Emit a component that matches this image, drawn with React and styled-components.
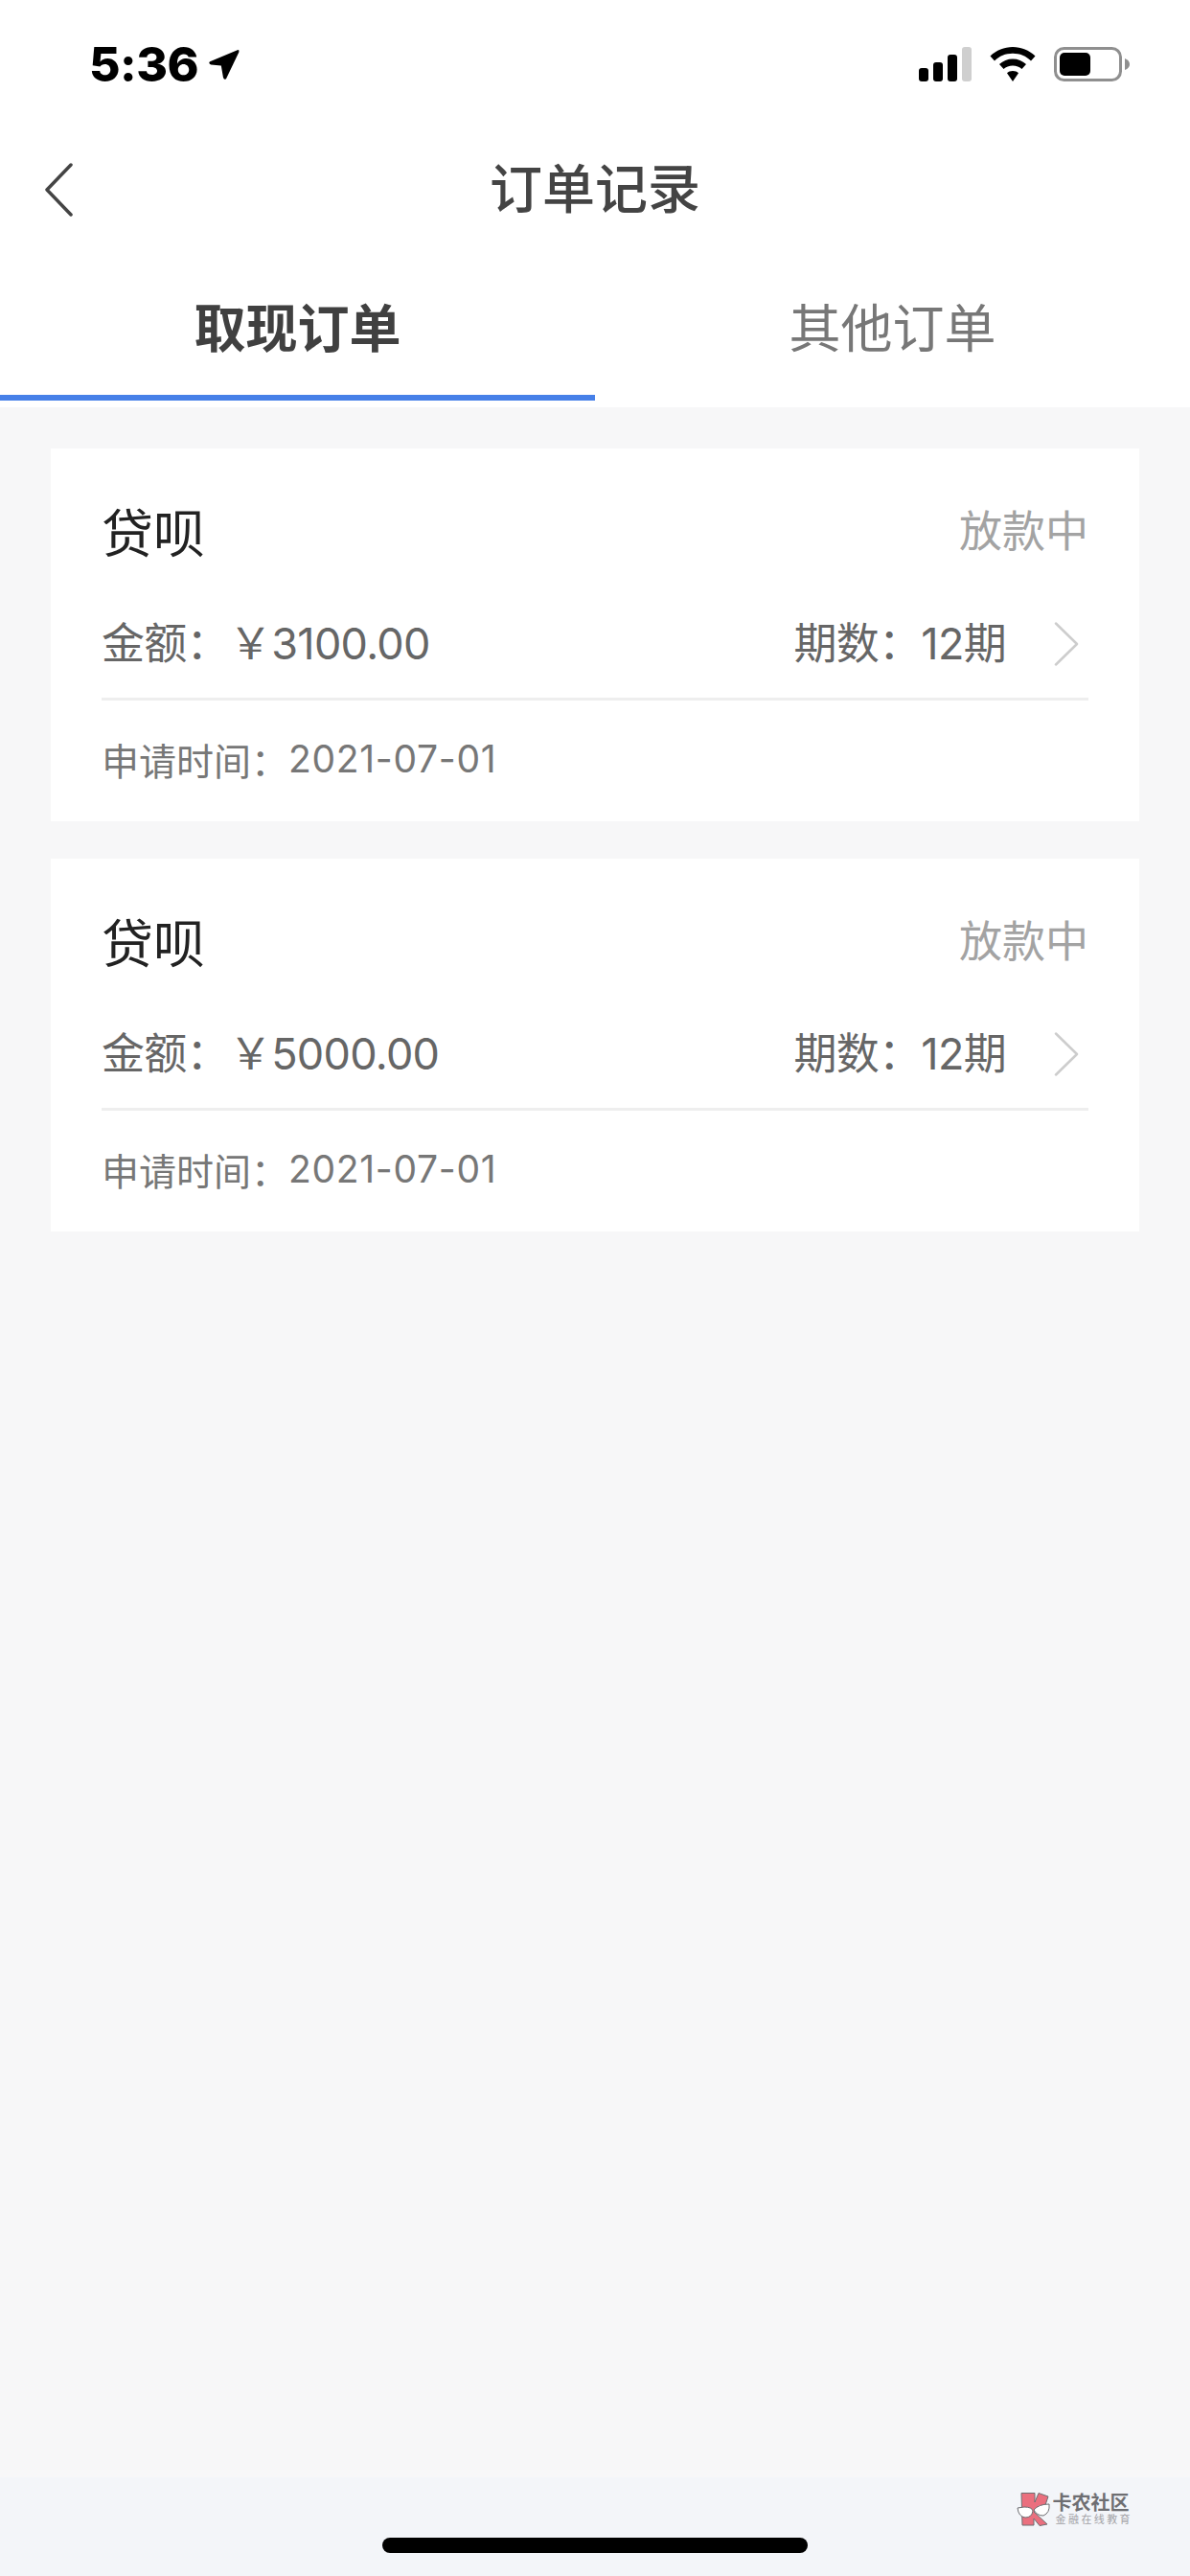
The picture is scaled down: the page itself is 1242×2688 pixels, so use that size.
import styled, { createGlobalStyle } from 'styled-components';

const GlobalStyle = createGlobalStyle`
  html, body {
    margin: 0;
    padding: 0;
    background: #f7f7f8;
  }
  * {
    box-sizing: border-box;
  }
`;

const orders = [
  { name: '贷呗', status: '放款中', amount: '3100.00', term: '12期', date: '2021-07-01' },
  { name: '贷呗', status: '放款中', amount: '5000.00', term: '12期', date: '2021-07-01' },
];

const Page = styled.div`
  position: relative;
  width: 1242px;
  height: 2688px;
  display: flex;
  flex-direction: column;
  font-family: Inter, "Noto Sans CJK SC", sans-serif;
  background: #f7f7f8;
`;

const StatusBar = styled.div`
  height: 134px;
  background: #fff;
  display: flex;
  justify-content: space-between;
  align-items: flex-start;
  padding: 49px 62px 0 93px;
`;

const TimeGroup = styled.div`
  display: flex;
  align-items: center;
  gap: 10px;
  height: 36px;
`;

const Time = styled.span`
  font-size: 50px;
  font-weight: 800;
  line-height: 36px;
  color: #000;
  letter-spacing: -0.5px;
`;

const StatusIcons = styled.div`
  display: flex;
  align-items: center;
  gap: 19px;
  height: 36px;
`;

const NavBar = styled.div`
  position: relative;
  height: 126px;
  background: #fff;
  display: flex;
  align-items: center;
  justify-content: center;
`;

const BackButton = styled.div`
  position: absolute;
  left: 45px;
  top: 36px;
  display: flex;
`;

const Title = styled.h1`
  margin: 0;
  font-size: 55px;
  font-weight: 500;
  line-height: 64px;
  color: #444;
`;

const Tabs = styled.div`
  display: flex;
  background: #fff;
  padding-bottom: 7px;
`;

const Tab = styled.div`
  flex: 1;
  height: 158px;
  padding-top: 52px;
  text-align: center;
  font-size: 54px;
  line-height: 64px;
  font-weight: ${(props) => (props.active ? 700 : 400)};
  color: ${(props) => (props.active ? '#404040' : '#777')};
  border-bottom: 6px solid ${(props) => (props.active ? '#4680e8' : '#fff')};
`;

const OrderList = styled.div`
  flex: 1;
  display: flex;
  flex-direction: column;
  gap: 39px;
  padding: 43px 53px 0;
`;

const Card = styled.div`
  background: #fff;
  padding: 0 53px;
`;

const CardHead = styled.div`
  display: flex;
  justify-content: space-between;
  align-items: center;
  height: 56px;
  margin-top: 62px;
`;

const OrderName = styled.span`
  font-size: 54px;
  line-height: 56px;
  color: #222;
`;

const OrderStatus = styled.span`
  font-size: 45px;
  line-height: 56px;
  color: #a3a3a3;
  position: relative;
  top: -3px;
`;

const AmountRow = styled.div`
  display: flex;
  justify-content: space-between;
  align-items: center;
  height: 103px;
  margin-top: 42px;
  padding-bottom: 12px;
  border-bottom: 3px solid #eeeeee;
`;

const Amount = styled.span`
  font-size: 45px;
  line-height: 56px;
  letter-spacing: -0.7px;
  color: #666;
`;

const Term = styled.div`
  display: flex;
  align-items: center;
  gap: 50px;
  padding-right: 10px;
`;

const DateRow = styled.div`
  height: 126px;
  display: flex;
  align-items: center;
  padding-bottom: 5px;
  font-size: 39px;
  color: #777;
`;

const DateValue = styled.span`
  letter-spacing: 0.7px;
`;

const Footer = styled.div`
  height: 103px;
  background: #f3f5f9;
  display: flex;
  justify-content: flex-end;
  align-items: flex-start;
  gap: 2px;
  padding: 16px 60px 0 0;
`;

const LogoText = styled.div`
  display: flex;
  flex-direction: column;
  align-items: flex-start;
`;

const LogoName = styled.span`
  font-size: 20px;
  line-height: 22px;
  font-weight: 700;
  color: #6e6e72;
`;

const LogoSlogan = styled.span`
  font-size: 11px;
  line-height: 12px;
  letter-spacing: 2.4px;
  color: #a2a2a6;
  margin-left: 3px;
`;

const HomeIndicator = styled.div`
  position: absolute;
  left: 399px;
  bottom: 24px;
  width: 444px;
  height: 16px;
  border-radius: 8px;
  background: #000;
`;

function App() {
  return (
    <Page>
      <GlobalStyle />
      <StatusBar>
        <TimeGroup>
          <Time>5:36</Time>
          <svg width="34" height="34" viewBox="0 0 32 32">
            <path d="M2 13.500 L29 2 Q31 1.500 30.500 4 L18 30 Q16 32 15 29 L13 17.500 L3 16.500 Q0 15 2 13.500 Z" fill="#000" />
          </svg>
        </TimeGroup>
        <StatusIcons>
          <svg width="55" height="36" viewBox="0 0 55 36">
            <rect x="0" y="22" width="10" height="14" rx="3" fill="#000" />
            <rect x="15" y="16" width="10" height="20" rx="3" fill="#000" />
            <rect x="30" y="8" width="10" height="28" rx="3" fill="#000" />
            <rect x="45" y="0" width="10" height="36" rx="3" fill="#cfcfcf" />
          </svg>
          <svg width="48" height="36" viewBox="0 0 48 36">
            <path d="M24 0 C33 0 41 3.500 47.500 9.500 L43 14.500 C38 9.500 31.500 6.800 24 6.800 C16.500 6.800 10 9.500 5 14.500 L0.500 9.500 C7 3.500 15 0 24 0 Z" fill="#000" />
            <path d="M24 12.500 C29.500 12.500 34 14.500 38 18 L33.500 23 C31 20.800 27.800 19.500 24 19.500 C20.200 19.500 17 20.800 14.500 23 L10 18 C14 14.500 18.500 12.500 24 12.500 Z" fill="#000" />
            <path d="M24 25 C26.500 25 28.500 25.800 30 27.200 L24 36 L18 27.200 C19.500 25.800 21.500 25 24 25 Z" fill="#000" />
          </svg>
          <svg width="80" height="36" viewBox="0 0 80 36">
            <rect x="1.500" y="1.500" width="68" height="33" rx="9" fill="none" stroke="#8f8f8f" strokeWidth="3" />
            <rect x="6" y="6" width="32" height="24" rx="5" fill="#000" />
            <path d="M74 12 Q79 14 79 18 Q79 22 74 24 Z" fill="#8f8f8f" />
          </svg>
        </StatusIcons>
      </StatusBar>

      <NavBar>
        <BackButton>
          <svg width="32" height="56" viewBox="0 0 32 56">
            <path d="M29 2 L4 28 L29 54" fill="none" stroke="#444" strokeWidth="3.500" strokeLinecap="round" strokeLinejoin="round" />
          </svg>
        </BackButton>
        <Title>订单记录</Title>
      </NavBar>

      <Tabs>
        <Tab active>取现订单</Tab>
        <Tab>其他订单</Tab>
      </Tabs>

      <OrderList>
        {orders.map((order) => (
          <Card key={order.amount}>
            <CardHead>
              <OrderName>{order.name}</OrderName>
              <OrderStatus>{order.status}</OrderStatus>
            </CardHead>
            <AmountRow>
              <Amount>金额：￥{order.amount}</Amount>
              <Term>
                <Amount>期数：{order.term}</Amount>
                <svg width="26" height="46" viewBox="0 0 26 46">
                  <path d="M2 1.500 L24 23 L2 44.500" fill="none" stroke="#cdcdcd" strokeWidth="2.500" strokeLinecap="round" strokeLinejoin="round" />
                </svg>
              </Term>
            </AmountRow>
            <DateRow>申请时间：<DateValue>{order.date}</DateValue></DateRow>
          </Card>
        ))}
      </OrderList>

      <Footer>
        <svg width="36" height="36" viewBox="0 0 36 36">
          <path d="M5 0.500 L19 0.500 L19 10 L23 0.500 L33 4 L30 13 L18 20 L32 33 L24 34.500 L18 27 L18 34 L6 34 Z" fill="#ea6f7e" stroke="#6e6e72" strokeWidth="1" />
          <path d="M1 16 L8 15 Q16 15 17 19 Q16 26 9 26 Q2 25 1 16 Z" fill="#fff" stroke="#6e6e72" strokeWidth="1" />
          <path d="M18 18 Q23 12 34 12 Q35 21 28 24 Q21 24 18 18 Z" fill="#fff" stroke="#6e6e72" strokeWidth="1" />
        </svg>
        <LogoText>
          <LogoName>卡农社区</LogoName>
          <LogoSlogan>金融在线教育</LogoSlogan>
        </LogoText>
      </Footer>
      <HomeIndicator />
    </Page>
  );
}

export default App;
